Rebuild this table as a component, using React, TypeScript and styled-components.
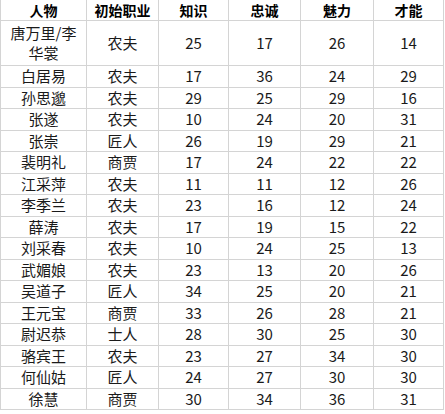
import React from "react";
import styled, { createGlobalStyle } from "styled-components";

type Row = {
  name: string
  job: string
  knowledge: number
  loyalty: number
  charm: number
  talent: number
}

const rows: Row[] = [
  { name: "唐万里/李华裳", job: "农夫", knowledge: 25, loyalty: 17, charm: 26, talent: 14 },
  { name: "白居易", job: "农夫", knowledge: 17, loyalty: 36, charm: 24, talent: 29 },
  { name: "孙思邈", job: "农夫", knowledge: 29, loyalty: 25, charm: 29, talent: 16 },
  { name: "张遂", job: "农夫", knowledge: 10, loyalty: 24, charm: 20, talent: 31 },
  { name: "张崇", job: "匠人", knowledge: 26, loyalty: 19, charm: 29, talent: 21 },
  { name: "裴明礼", job: "商贾", knowledge: 17, loyalty: 24, charm: 22, talent: 22 },
  { name: "江采萍", job: "农夫", knowledge: 11, loyalty: 11, charm: 12, talent: 26 },
  { name: "李季兰", job: "农夫", knowledge: 23, loyalty: 16, charm: 12, talent: 24 },
  { name: "薛涛", job: "农夫", knowledge: 17, loyalty: 19, charm: 15, talent: 22 },
  { name: "刘采春", job: "农夫", knowledge: 10, loyalty: 24, charm: 25, talent: 13 },
  { name: "武媚娘", job: "农夫", knowledge: 23, loyalty: 13, charm: 20, talent: 26 },
  { name: "吴道子", job: "匠人", knowledge: 34, loyalty: 25, charm: 20, talent: 21 },
  { name: "王元宝", job: "商贾", knowledge: 33, loyalty: 26, charm: 28, talent: 21 },
  { name: "尉迟恭", job: "士人", knowledge: 28, loyalty: 30, charm: 25, talent: 30 },
  { name: "骆宾王", job: "农夫", knowledge: 23, loyalty: 27, charm: 34, talent: 30 },
  { name: "何仙姑", job: "匠人", knowledge: 24, loyalty: 27, charm: 30, talent: 30 },
  { name: "徐慧", job: "商贾", knowledge: 30, loyalty: 34, charm: 36, talent: 31 },
]

const columns = [
  { title: "人物", width: 86 },
  { title: "初始职业", width: 72 },
  { title: "知识", width: 70 },
  { title: "忠诚", width: 72 },
  { title: "魅力", width: 73 },
  { title: "才能", width: 70 },
]

const GlobalStyle = createGlobalStyle`
  body {
    margin: 0;
    background: #ffffff;
  }
`

const Sheet = styled.table`
  border-collapse: collapse;
  table-layout: fixed;
  width: 444px;
  font-family: "Noto Sans CJK SC", "Noto Sans", sans-serif;
  color: #1a1a1a;
`

const Tr = styled.tr<{ $height: number }>`
  height: ${(p) => p.$height}px;
`

const HeadCell = styled.th`
  border: 1px solid #d4d4d4;
  border-top: none;
  padding: 0;
  font-size: 14px;
  font-weight: 700;
  line-height: 18px;
  color: #000000;
  text-align: center;
`

const Cell = styled.td`
  border: 1px solid #d4d4d4;
  padding: 0 4px;
  font-size: 15px;
  font-weight: 400;
  line-height: 20px;
  text-align: center;
  vertical-align: middle;
`

// the sheet rows are not all the same height in the capture
const rowHeight = (i: number) => {
  if (i === 0) return 45
  return i % 2 === 1 ? 22 : 21
}

export default function App() {
  return (
    <>
      <GlobalStyle />
      <Sheet>
        <colgroup>
          {columns.map((c) => (
            <col key={c.title} style={{ width: c.width }} />
          ))}
        </colgroup>
        <thead>
          <Tr $height={20}>
            {columns.map((c) => (
              <HeadCell key={c.title}>{c.title}</HeadCell>
            ))}
          </Tr>
        </thead>
        <tbody>
          {rows.map((r, i) => (
            <Tr key={r.name} $height={rowHeight(i)}>
              <Cell>{r.name}</Cell>
              <Cell>{r.job}</Cell>
              <Cell>{r.knowledge}</Cell>
              <Cell>{r.loyalty}</Cell>
              <Cell>{r.charm}</Cell>
              <Cell>{r.talent}</Cell>
            </Tr>
          ))}
        </tbody>
      </Sheet>
    </>
  )
}
